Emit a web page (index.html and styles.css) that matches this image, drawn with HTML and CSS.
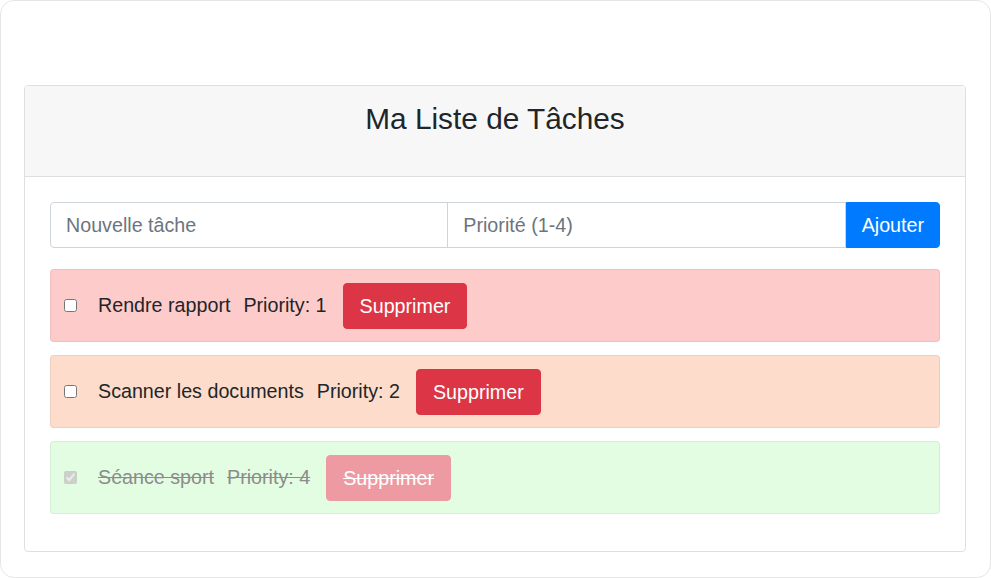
FILE: index.html
```html
<!DOCTYPE html>
<html lang="fr">
<head>
<meta charset="utf-8">
<title>Ma Liste de Tâches</title>
<link rel="stylesheet" href="styles.css">
</head>
<body>
<div class="frame">
  <div class="card">
    <div class="card-header">
      <h2 class="title">Ma Liste de Tâches</h2>
    </div>
    <div class="card-body">
      <div class="input-group">
        <input class="field" type="text" placeholder="Nouvelle tâche">
        <input class="field field-second" type="text" placeholder="Priorité (1-4)">
        <button class="btn btn-add">Ajouter</button>
      </div>
      <ul class="tasks">
        <li class="task task-p1">
          <input class="check" type="checkbox">
          <span class="task-name">Rendre rapport</span>
          <span class="task-priority">Priority: 1</span>
          <button class="btn btn-delete">Supprimer</button>
        </li>
        <li class="task task-p2">
          <input class="check" type="checkbox">
          <span class="task-name">Scanner les documents</span>
          <span class="task-priority">Priority: 2</span>
          <button class="btn btn-delete">Supprimer</button>
        </li>
        <li class="task task-p4 task-done">
          <input class="check" type="checkbox" checked disabled>
          <span class="task-name">Séance sport</span>
          <span class="task-priority">Priority: 4</span>
          <button class="btn btn-delete">Supprimer</button>
        </li>
      </ul>
    </div>
  </div>
</div>
</body>
</html>
```

FILE: styles.css
```css
* { box-sizing: border-box; }
html, body { margin: 0; padding: 0; background: #fff; }
body {
  font-family: "Liberation Sans", Arial, sans-serif;
  color: #212529;
}
.frame {
  height: 578px;
  border: 1px solid #e6e6e6;
  border-radius: 14px;
  padding: 84px 24px 0 23px;
}
.card {
  border: 1px solid #dfdfdf;
  border-radius: 4px;
  background: #fff;
  overflow: hidden;
}
.card-header {
  background: #f7f7f7;
  border-bottom: 1px solid #dfdfdf;
  padding: 15px 20px 39px;
  height: 91px;
}
.title {
  margin: 0;
  font-size: 29.8px;
  font-weight: 400;
  line-height: 1.2;
  text-align: center;
  color: #212529;
}
.card-body {
  padding: 25px 25px 24px;
}
.input-group {
  display: flex;
  margin-bottom: 21px;
}
.field {
  flex: 1 1 0;
  min-width: 0;
  height: 46px;
  padding: 7px 15px;
  font-family: inherit;
  font-size: 19.7px;
  line-height: 30px;
  color: #495057;
  border: 1px solid #ced4da;
  background: #fff;
  outline: none;
}
.field::placeholder { color: #6c757d; }
.field:first-child { border-radius: 4px 0 0 4px; }
.field-second { margin-left: -1px; border-radius: 0; }
.btn {
  font-family: inherit;
  font-size: 19.7px;
  line-height: 30px;
  color: #fff;
  border: 1px solid transparent;
  border-radius: 4px;
  padding: 7px 16px;
  height: 46px;
  cursor: pointer;
}
.btn-add {
  background: #007bff;
  border-color: #007bff;
  border-radius: 0 4px 4px 0;
  padding: 7px 15px;
}
.tasks {
  list-style: none;
  margin: 0;
  padding: 0;
}
.task {
  display: flex;
  align-items: center;
  height: 73px;
  padding: 0 13px;
  margin-bottom: 13px;
  border: 1px solid rgba(0, 0, 0, 0.06);
  border-radius: 4px;
  font-size: 19.7px;
}
.task-p1 { background: #fecbcb; }
.task-p2 { background: #fddccb; }
.task-p4 { background: #e3fde3; }
.check {
  width: 13px;
  height: 13px;
  margin: 0 21px 0 0;
}
.task-name { margin-right: 13px; }
.task-priority { margin-right: 16px; }
.btn-delete {
  background: #dc3545;
  border-color: #dc3545;
}
.task-done .task-name,
.task-done .task-priority {
  color: #8c8c8c;
  text-decoration: line-through;
}
.task-done .btn-delete {
  background: #ee9aa2;
  border-color: #ee9aa2;
  text-decoration: line-through;
}
```
